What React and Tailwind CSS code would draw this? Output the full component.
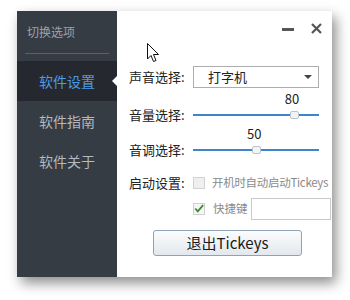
const font = { fontFamily: '"Noto Sans CJK SC", "Noto Sans", sans-serif' };

const Slider = ({ value }) => (
    <div className="relative w-[126px] h-[20px] flex items-center shrink-0">
        <div className="w-full h-[2px] bg-[#3f85c9]" />
        <div
            className="absolute top-[6px] w-[9px] h-[8px] -ml-[4px] bg-[#f1f3f5] border border-[#b9c3cc] rounded-[2px]"
            style={{ left: `${value}%` }}
        />
        <span
            className="absolute -top-[13px] -ml-[9px] text-[13px] leading-[14px] text-[#222]"
            style={{ left: `${value}%` }}
        >
            {value}
        </span>
    </div>
);

const Cursor = () => (
    <svg className="absolute left-[147px] top-[43px]" width="13" height="20" viewBox="0 0 13 20">
        <path d="M0.5 0.5 L0.5 16 L4 12.5 L6.5 18.5 L9 17.5 L6.5 11.5 L11.5 11.5 Z" fill="#fff" stroke="#111" strokeWidth="1" strokeLinejoin="round" />
    </svg>
);

export default function App() {
    return (
        <div className="relative w-[350px] h-[300px] bg-white pl-[17px] pt-[11px]" style={font}>
            <div className="flex w-[315px] h-[266px] shadow-[4px_6px_12px_rgba(0,0,0,0.45)]">
                {/* Sidebar */}
                <div className="w-[100px] shrink-0 bg-[#353c44] flex flex-col">
                    <div className="h-[42px] flex items-center pl-[10px] text-[12px] text-[#9ca3aa]">切换选项</div>
                    <div className="mx-[8px] h-px bg-[#59616a]" />
                    <div className="mt-[7px] relative h-[40px] bg-[#25292f] flex items-center justify-center text-[14px] text-[#4d9be6]">
                        软件设置
                        <div className="absolute right-0 top-[15px] w-0 h-0 border-y-[5px] border-y-transparent border-r-[5px] border-r-white" />
                    </div>
                    <div className="h-[40px] flex items-center justify-center text-[14px] text-[#b4b9be]">软件指南</div>
                    <div className="h-[40px] flex items-center justify-center text-[14px] text-[#b4b9be]">软件关于</div>
                </div>

                {/* Main */}
                <div className="w-[215px] shrink-0 bg-white flex flex-col pl-[12px] text-[13px] text-[#222] whitespace-nowrap">
                    <div className="h-[55px] flex justify-end items-start pt-[12px] pr-[10px] gap-[17px]">
                        <div className="mt-[5px] w-[12px] h-[3px] bg-[#555]" />
                        <svg width="11" height="11" viewBox="0 0 11 11">
                            <path d="M1 1 L10 10 M10 1 L1 10" stroke="#555" strokeWidth="2.2" />
                        </svg>
                    </div>

                    <div className="flex items-center h-[22px]">
                        <span className="w-[64px] shrink-0">声音选择:</span>
                        <div className="w-[126px] h-[22px] border border-[#adadad] flex items-center justify-between pl-[14px] pr-[6px]">
                            <span>打字机</span>
                            <div className="w-0 h-0 border-x-[4px] border-x-transparent border-t-[4px] border-t-[#444]" />
                        </div>
                    </div>

                    <div className="flex items-center h-[24px] mt-[15px]">
                        <span className="w-[64px] shrink-0">音量选择:</span>
                        <Slider value={80} />
                    </div>

                    <div className="flex items-center h-[24px] mt-[11px]">
                        <span className="w-[64px] shrink-0">音调选择:</span>
                        <Slider value={50} />
                    </div>

                    <div className="flex items-center h-[24px] mt-[9px]">
                        <span className="w-[64px] shrink-0">启动设置:</span>
                        <div className="w-[12px] h-[12px] shrink-0 border border-[#d2d2d2] bg-[#efefef]" />
                        <span className="ml-[7px] text-[11.5px] tracking-[-0.3px] text-[#8a8a8a]">开机时自动启动Tickeys</span>
                    </div>

                    <div className="flex items-center h-[22px] mt-[3px] pl-[64px]">
                        <div className="w-[12px] h-[12px] shrink-0 border border-[#cfcfcf] bg-[#f6f6f6] flex items-center justify-center">
                            <svg width="12" height="11" viewBox="0 0 12 11" className="-mt-[1px]">
                                <path d="M1.5 5.5 L4.5 9 L11 1.5" fill="none" stroke="#3f8c30" strokeWidth="2.2" />
                            </svg>
                        </div>
                        <span className="ml-[8px] text-[11.5px] text-[#8a8a8a]">快捷键</span>
                        <div className="ml-[3px] w-[80px] h-[22px] shrink-0 border border-[#c9c9c9]" />
                    </div>

                    <div className="mt-[10px] ml-[24px] w-[149px] h-[26px] rounded-[3px] border border-[#8fa3b8] bg-gradient-to-b from-[#fbfcfd] to-[#e3e8ee] flex items-center justify-center text-[15px] text-[#1a1a1a]">
                        退出Tickeys
                    </div>
                </div>
            </div>
            <Cursor />
        </div>
    );
}
